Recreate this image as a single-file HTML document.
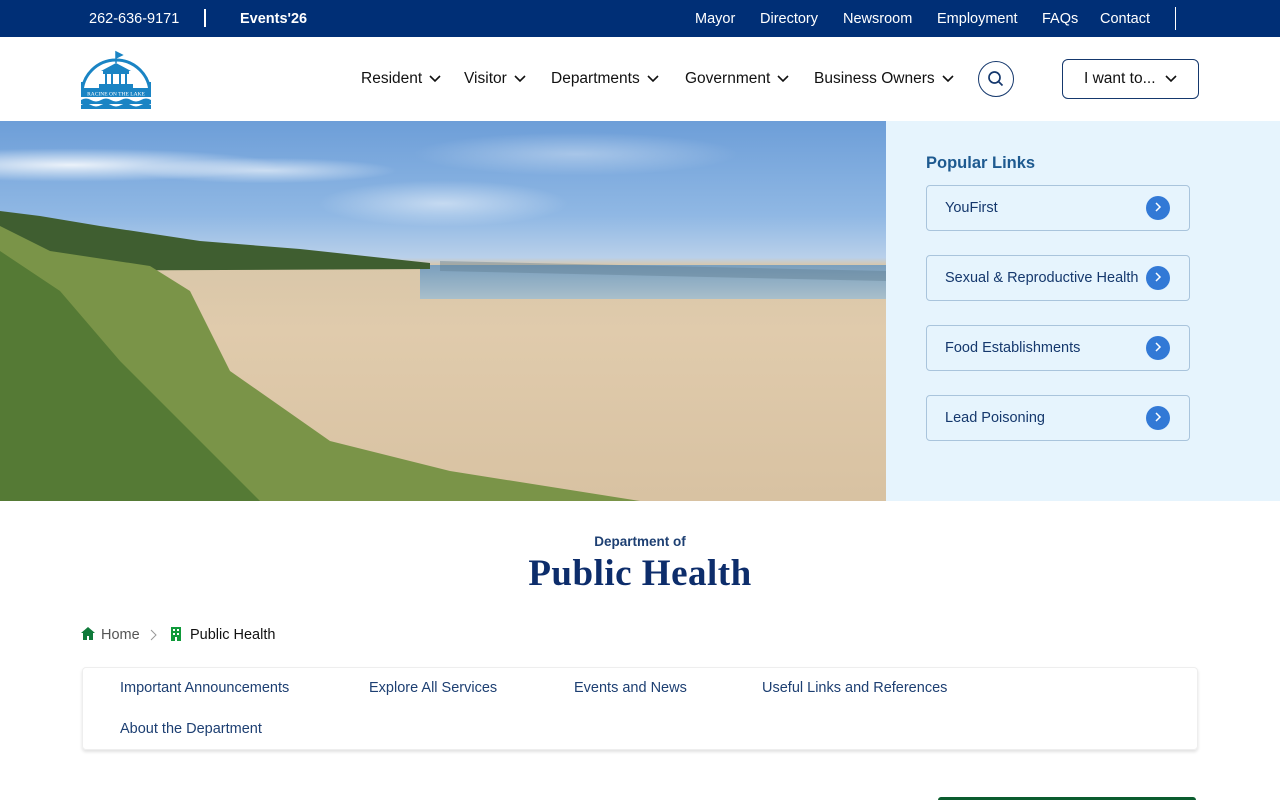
<!DOCTYPE html>
<html><head><meta charset="utf-8"><style>
*{box-sizing:border-box;margin:0;padding:0}
html,body{width:1280px;height:800px;overflow:hidden}
body{font-family:"Liberation Sans",sans-serif;background:#fff;position:relative}
.top{position:absolute;left:0;top:0;width:1280px;height:37px;background:#002f76;color:#fff;font-size:14.5px}
.top span{position:absolute;top:11px}
.hdr{position:absolute;top:37px;left:0;width:1280px;height:84px;background:#fff}
.nav{position:absolute;top:70px;font-size:15.5px;color:#111}
.nav svg{vertical-align:middle;margin-left:7px}
.hero{position:absolute;top:121px;left:0;width:886px;height:380px;overflow:hidden;
background:linear-gradient(180deg,#6d9ed8 0%,#90b8e4 25%,#b9d0ea 36%,#d9c7a9 38%,#e0cbac 55%,#d8c2a2 100%)}
.side{position:absolute;top:121px;left:886px;width:394px;height:380px;background:#e6f4fd}
.pl{position:absolute;left:926px;width:264px;height:46px;border:1px solid #a9c4dc;border-radius:4px;font-size:14.5px;color:#15386d}
.pl span{position:absolute;left:18px;top:14px}
.pl i{position:absolute;right:19px;top:10px;width:24px;height:24px;border-radius:50%;background:#3279d6}
.tabs{position:absolute;left:82px;top:667px;width:1116px;height:83px;border:1px solid #eee;border-radius:4px;box-shadow:0 2px 3px rgba(0,0,0,.12);font-size:14.5px;color:#1d3f72}
.tabs span{position:absolute}
</style></head><body>
<div class="top">
<span style="left:89px">262-636-9171</span>
<span style="left:204px;top:9px;width:2px;height:18px;background:#fff"></span>
<span style="left:240px;font-weight:bold">Events'26</span>
<span style="left:695px">Mayor</span><span style="left:760px">Directory</span><span style="left:843px">Newsroom</span><span style="left:937px">Employment</span><span style="left:1042px">FAQs</span><span style="left:1100px">Contact</span>
<span style="left:1175px;top:7px;width:1px;height:23px;background:#fff"></span>
</div>
<div class="hdr"></div>
<svg style="position:absolute;left:81px;top:48px" width="70" height="61" viewBox="0 0 70 61">
<path d="M1 46 A34 34 0 0 1 69 46" fill="none" stroke="#1a84c4" stroke-width="3"/>
<path d="M1 46 V34 M69 46 V34" stroke="#1a84c4" stroke-width="3"/>
<rect x="0" y="40" width="70" height="9" fill="#1a84c4"/>
<text x="35" y="47.5" font-size="5.5" fill="#fff" text-anchor="middle" font-family="Liberation Serif">RACINE ON THE LAKE</text>
<path d="M20 23 L35 15 L50 23 Z" fill="#1a84c4"/><rect x="22" y="23" width="26" height="3" fill="#1a84c4"/>
<path d="M25 26v10M31 26v10M39 26v10M45 26v10" stroke="#1a84c4" stroke-width="2"/>
<rect x="18" y="36" width="34" height="4" fill="#1a84c4"/>
<path d="M35 15V4l6 3-6 3" stroke="#1a84c4" stroke-width="1.5" fill="#1a84c4"/>
<path d="M0 52 q5 -3 10 0 t10 0 t10 0 t10 0 t10 0 t10 0 t10 0 V56 H0Z M0 57 q5 -3 10 0 t10 0 t10 0 t10 0 t10 0 t10 0 t10 0 V61 H0Z" fill="#1a84c4"/>
</svg>
<div class="nav" style="left:361px">Resident<svg width="12" height="8"><path d="M1 1l5 5 5-5" stroke="#111" stroke-width="1.6" fill="none"/></svg></div>
<div class="nav" style="left:464px">Visitor<svg width="12" height="8"><path d="M1 1l5 5 5-5" stroke="#111" stroke-width="1.6" fill="none"/></svg></div>
<div class="nav" style="left:551px">Departments<svg width="12" height="8"><path d="M1 1l5 5 5-5" stroke="#111" stroke-width="1.6" fill="none"/></svg></div>
<div class="nav" style="left:685px">Government<svg width="12" height="8"><path d="M1 1l5 5 5-5" stroke="#111" stroke-width="1.6" fill="none"/></svg></div>
<div class="nav" style="left:814px">Business Owners<svg width="12" height="8"><path d="M1 1l5 5 5-5" stroke="#111" stroke-width="1.6" fill="none"/></svg></div>
<div style="position:absolute;left:978px;top:61px;width:36px;height:36px;border:1px solid #15386d;border-radius:50%"></div>
<svg style="position:absolute;left:987px;top:70px" width="18" height="18"><circle cx="7.5" cy="7.5" r="5.5" stroke="#15386d" stroke-width="1.7" fill="none"/><path d="M11.5 11.5l4 4" stroke="#15386d" stroke-width="1.7"/></svg>
<div style="position:absolute;left:1062px;top:59px;width:137px;height:40px;border:1px solid #15386d;border-radius:6px;font-size:15.5px;color:#111;padding:10px 0 0 21px">I want to...<svg style="margin-left:9px;vertical-align:middle" width="12" height="8"><path d="M1 1l5 5 5-5" stroke="#111" stroke-width="1.6" fill="none"/></svg></div>
<div class="hero">
<div style="position:absolute;left:0;top:0;width:886px;height:110px;background:radial-gradient(ellipse at 8% 40%,rgba(255,255,255,.85),transparent 18%),radial-gradient(ellipse at 30% 45%,rgba(255,255,255,.6),transparent 15%),radial-gradient(ellipse at 50% 75%,rgba(255,255,255,.5),transparent 20%),radial-gradient(ellipse at 65% 30%,rgba(255,255,255,.35),transparent 20%)"></div>
<div style="position:absolute;left:420px;top:144px;width:466px;height:34px;background:linear-gradient(#7a9fbd,#a9bfcb)"></div>
<svg style="position:absolute;left:0;top:0" width="886" height="380">
<path d="M0 90 L40 95 L100 105 L200 120 L300 128 L430 142 L430 148 L0 150Z" fill="#3f5e30"/>
<path d="M0 105 L50 130 L150 145 L190 170 L230 250 L330 320 L450 350 L640 380 L0 380Z" fill="#7a9448"/>
<path d="M0 130 L60 170 L120 240 L200 320 L260 380 L0 380Z" fill="#557a35"/>
<path d="M440 140 L886 150 L886 160 L440 150Z" fill="#5d7a8e" opacity=".4"/></svg>
</div>
<div class="side"></div>
<div style="position:absolute;left:926px;top:154px;font-size:16.5px;font-weight:bold;color:#1e5a90">Popular Links</div>
<div class="pl" style="top:185px"><span>YouFirst</span><i></i></div>
<div class="pl" style="top:255px"><span>Sexual &amp; Reproductive Health</span><i></i></div>
<div class="pl" style="top:325px"><span>Food Establishments</span><i></i></div>
<div class="pl" style="top:395px"><span>Lead Poisoning</span><i></i></div>
<svg style="position:absolute;left:0;top:0;pointer-events:none" width="1280" height="450"><g stroke="#fff" stroke-width="1.5" fill="none"><path d="M1156 203l4 4-4 4M1156 273l4 4-4 4M1156 343l4 4-4 4M1156 413l4 4-4 4"/></g></svg>
<div style="position:absolute;left:0;width:1280px;top:534px;text-align:center;font-size:13.5px;font-weight:bold;color:#1d3f72">Department of</div>
<div style="position:absolute;left:0;width:1280px;top:552px;text-align:center;font-family:'Liberation Serif',serif;font-size:37px;font-weight:bold;color:#0d2d6b;letter-spacing:.5px">Public Health</div>
<svg style="position:absolute;left:81px;top:627px" width="14" height="13"><path d="M7 0L0 6h2v7h4V9h2v4h4V6h2Z" fill="#0f7a3a"/></svg>
<div style="position:absolute;left:101px;top:627px;font-size:14.5px;color:#555">Home</div>
<svg style="position:absolute;left:150px;top:629px" width="8" height="12"><path d="M1 1l5 5-5 5" stroke="#999" fill="none"/></svg>
<svg style="position:absolute;left:171px;top:627px" width="10" height="14"><rect width="10" height="14" fill="#0f9a3a"/><g fill="#fff"><rect x="2" y="2" width="2" height="2"/><rect x="6" y="2" width="2" height="2"/><rect x="2" y="6" width="2" height="2"/><rect x="6" y="6" width="2" height="2"/><rect x="4" y="10" width="2" height="4"/></g></svg>
<div style="position:absolute;left:190px;top:627px;font-size:14.5px;color:#111">Public Health</div>
<div class="tabs">
<span style="left:37px;top:12px">Important Announcements</span>
<span style="left:286px;top:12px">Explore All Services</span>
<span style="left:491px;top:12px">Events and News</span>
<span style="left:679px;top:12px">Useful Links and References</span>
<span style="left:37px;top:53px">About the Department</span>
</div>
<div style="position:absolute;left:938px;top:797px;width:258px;height:3px;background:#0b5c2e;border-radius:8px 8px 0 0"></div>
</body></html>
